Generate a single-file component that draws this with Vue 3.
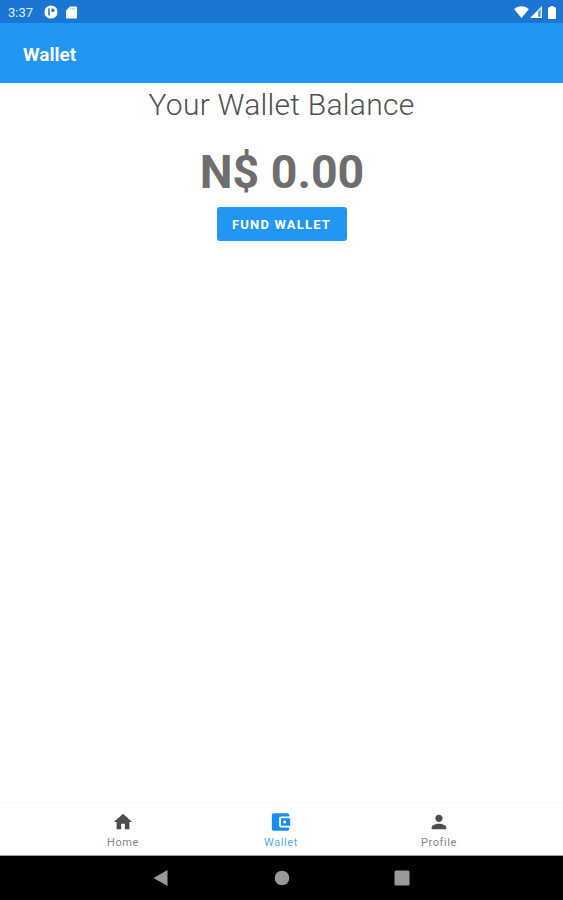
<script setup>
const tabs = [
  { label: 'Home', path: 'M10 20v-6h4v6h5v-8h3L12 3 2 12h3v8z' },
  {
    label: 'Wallet',
    active: true,
    path: 'M21 18v1.500c0 1.100-.9 2-2 2H4c-1.100 0-2-.9-2-2v-15c0-1.100.9-2 2-2h15c1.100 0 2 .9 2 2V6h-9c-1.100 0-2 .9-2 2v8c0 1.100.9 2 2 2zM12 16h10V8H12zm4-2.300c-.94 0-1.700-.76-1.700-1.700s.76-1.700 1.700-1.700 1.700.76 1.700 1.700-.76 1.700-1.700 1.700z',
  },
  {
    label: 'Profile',
    path: 'M12 12c2.210 0 4-1.790 4-4s-1.790-4-4-4-4 1.790-4 4 1.790 4 4 4zm0 2c-2.670 0-8 1.340-8 4v2h16v-2c0-2.660-5.330-4-8-4z',
  },
]
</script>

<template>
  <div class="screen">
    <div class="status">
      <span class="time">3:37</span>
      <svg class="app-dot" viewBox="0 0 14 14">
        <circle cx="7" cy="7" r="6.600" fill="#fff" />
        <path d="M5 3.200v7.400" fill="none" stroke="#1976d2" stroke-width="1.500" />
        <path d="M7.500 3.400h1.300a1.700 1.700 0 0 1 0 3.600H7.500z" fill="#1976d2" />
      </svg>
      <svg class="sd" viewBox="0 0 11 13">
        <path d="M4 .5h6a1 1 0 0 1 1 1v10a1 1 0 0 1-1 1H1a1 1 0 0 1-1-1V4.500z" fill="#fff" />
        <path d="M4.400 2v1.500M6.400 2v1.500M8.400 2v1.500" stroke="#1976d2" stroke-width=".5" />
      </svg>
      <span class="grow"></span>
      <svg class="wifi" viewBox="0 0 15 12">
        <path d="M7.500 12 .2 3.200C4.200-.6 10.800-.6 14.800 3.200z" fill="#fff" />
      </svg>
      <svg class="signal" viewBox="0 0 12 12">
        <path d="M0 12 12 0v12z" fill="#fff" />
        <path d="M8 5.500 10.700 2.800v8H8z" fill="#5b9cdf" />
      </svg>
      <svg class="battery" viewBox="0 0 8 13">
        <path d="M2.500 0h3v1.300H7a1 1 0 0 1 1 1V12a1 1 0 0 1-1 1H1a1 1 0 0 1-1-1V2.300a1 1 0 0 1 1-1h1.500z" fill="#fff" />
      </svg>
    </div>
    <header class="bar">Wallet</header>
    <main class="content">
      <h1 class="title">Your Wallet Balance</h1>
      <div class="amount">N$ 0.00</div>
      <button class="fund">FUND WALLET</button>
    </main>
    <nav class="tabs">
      <div v-for="tab in tabs" :key="tab.label" class="tab" :class="{ active: tab.active }">
        <svg class="tab-icon" viewBox="0 0 24 24"><path :d="tab.path" fill="currentColor" fill-rule="evenodd" /></svg>
        <span class="tab-label">{{ tab.label }}</span>
      </div>
    </nav>
    <div class="system">
      <svg class="sys" viewBox="0 0 16 16"><path d="M.5 8 14.500 0v16z" fill="#999" /></svg>
      <svg class="sys" viewBox="0 0 16 16"><circle cx="8" cy="8" r="7.300" fill="#999" /></svg>
      <svg class="sys" viewBox="0 0 16 16"><rect x=".5" y=".5" width="15" height="15" rx="1.500" fill="#999" /></svg>
    </div>
  </div>
</template>

<style>
body { margin: 0; }
</style>

<style scoped>
.screen {
  display: flex;
  flex-direction: column;
  width: 563px;
  height: 900px;
  overflow: hidden;
  background: #fff;
  font-family: Roboto, sans-serif;
}
.status {
  display: flex;
  align-items: center;
  box-sizing: border-box;
  height: 23px;
  padding: 1px 7px 0 8px;
  background: #1976d2;
}
.time { padding-top: 2px; font-size: 13px; line-height: 20px; color: #e3effb; width: 36px; }
.app-dot { width: 14px; height: 14px; }
.sd { width: 11px; height: 13px; margin-left: 8px; }
.grow { flex: 1; }
.wifi { width: 15px; height: 12px; }
.signal { width: 12px; height: 12px; margin-left: 1px; }
.battery { width: 8px; height: 13px; margin-left: 6px; }
.bar {
  box-sizing: border-box;
  height: 60px;
  padding: 2px 23px 0;
  background: #2196f3;
  color: #fff;
  font-size: 19px;
  font-weight: 700;
  line-height: 60px;
}
.content {
  display: flex;
  flex: 1;
  flex-direction: column;
  align-items: center;
}
.title {
  margin: 4px 0 0;
  color: #505050;
  font-size: 30px;
  font-weight: 300;
  letter-spacing: .26px;
  line-height: 36px;
  white-space: nowrap;
}
.amount {
  margin-top: 20px;
  padding-left: 1px;
  color: #6e6e6e;
  font-size: 46.500px;
  font-weight: 700;
  line-height: 58px;
  white-space: nowrap;
}
.fund {
  width: 130px;
  height: 34px;
  margin-top: 6px;
  padding: 0;
  border: 0;
  border-radius: 3px;
  background: #2196f3;
  color: #fff;
  font-family: inherit;
  font-size: 13px;
  font-weight: 700;
  letter-spacing: 1.200px;
  white-space: nowrap;
}
.tabs {
  display: flex;
  justify-content: center;
  box-sizing: border-box;
  height: 54px;
  padding-right: 1px;
  border-top: 1px solid #f7f7f7;
  border-bottom: 1px solid #a0a0a0;
}
.tab {
  display: flex;
  flex-direction: column;
  align-items: center;
  width: 158px;
  padding-top: 8px;
  color: #4d4d4d;
}
.tab-icon { width: 22px; height: 22px; }
.tab-label { margin-top: 3px; color: #858585; font-size: 11px; line-height: 14px; letter-spacing: .6px; }
.active { color: #1c8df0; }
.active .tab-label { color: #5aa9f2; }
.system {
  display: flex;
  justify-content: center;
  align-items: center;
  gap: 104.500px;
  height: 44px;
  background: #000;
}
.sys { width: 16px; height: 16px; }
</style>
